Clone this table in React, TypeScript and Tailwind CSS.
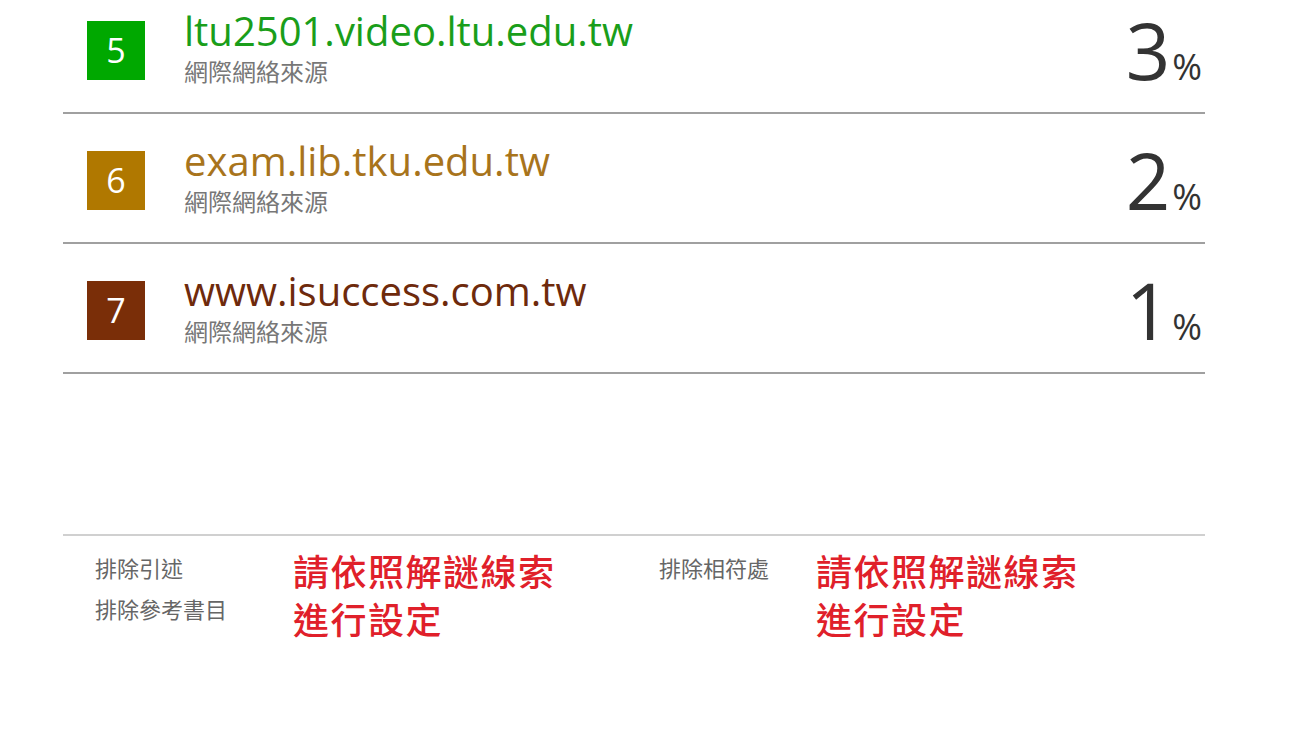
const font = { fontFamily: '"Open Sans", "Noto Sans CJK TC", sans-serif' }

type Source = {
  rank: number
  domain: string
  percent: number
  box: string
  text: string
}

const sources: Source[] = [
  { rank: 5, domain: 'ltu2501.video.ltu.edu.tw', percent: 3, box: 'bg-[#00a800]', text: 'text-[#1a9e1a]' },
  { rank: 6, domain: 'exam.lib.tku.edu.tw', percent: 2, box: 'bg-[#b07800]', text: 'text-[#a8741c]' },
  { rank: 7, domain: 'www.isuccess.com.tw', percent: 1, box: 'bg-[#7a2e08]', text: 'text-[#6e2a0c]' },
]

function SourceRow({ s }: { s: Source }) {
  return (
    <div className="flex h-[130px] items-center justify-between border-b-2 border-[#a0a0a0]">
      <div className="flex items-center">
        <div
          className={`ml-6 mt-[4px] flex h-[59px] w-[58px] items-center justify-center text-[34px] text-white ${s.box}`}
        >
          {s.rank}
        </div>
        <div className="ml-[39px] flex flex-col">
          <div className={`text-[40px] leading-[40px] ${s.text}`}>{s.domain}</div>
          <div className="mt-[8px] text-[24px] leading-[26px] text-[#777777]">網際網絡來源</div>
        </div>
      </div>
      <div className="mr-[3px] mt-[4px] flex items-baseline text-[#333333]">
        <span className="text-[78px] leading-[90px]">{s.percent}</span>
        <span className="ml-[2px] text-[36px] leading-[44px]">%</span>
      </div>
    </div>
  )
}

function Setting({ label }: { label: string[] }) {
  return (
    <>
      <div className="flex flex-col gap-[15px] pt-[6px] text-[22px] leading-[26px] text-[#666666]">
        {label.map((l) => (
          <div key={l}>{l}</div>
        ))}
      </div>
      <div className="text-[36px] font-medium leading-[48px] tracking-[1.5px] text-[#e0202a]">
        <div>請依照解謎線索</div>
        <div>進行設定</div>
      </div>
    </>
  )
}

export default function App() {
  return (
    <div className="min-h-[746px] w-full bg-white" style={font}>
      <div className="ml-[63px] w-[1142px]">
        <div className="-mt-[16px]">
          {sources.map((s) => (
            <SourceRow key={s.rank} s={s} />
          ))}
        </div>
        <div className="mt-[160px] border-t-2 border-[#d0d0d0]">
          <div className="grid grid-cols-[198px_366px_157px_1fr] pt-[13px] pl-8">
            <Setting label={['排除引述', '排除參考書目']} />
            <Setting label={['排除相符處']} />
          </div>
        </div>
      </div>
    </div>
  )
}
